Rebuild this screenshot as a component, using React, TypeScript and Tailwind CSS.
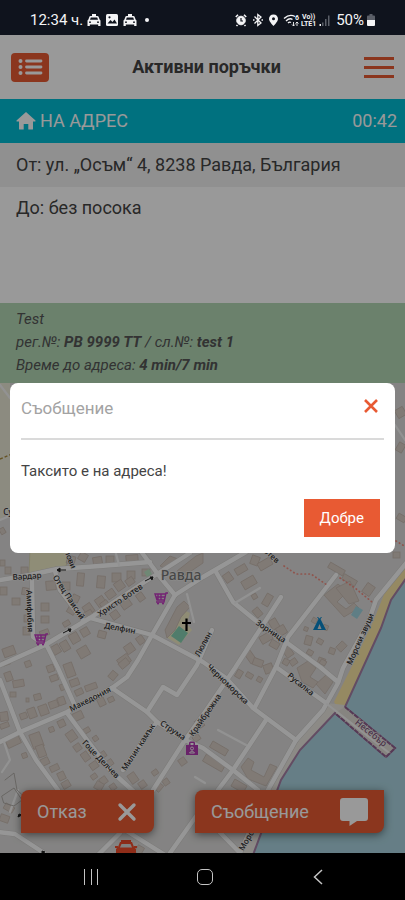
import React from "react";

type Box = [x: number, y: number, w: number, h: number, angle: number];

// Main streets, drawn wide with a thin darker casing.
const streets: string[] = [
  "M0 580L30 575L57 569L100 566L150 562",
  "M32 577L33 637L45 645",
  "M55 571L60 590L83 620",
  "M-2 666L45 645L90 618L143 583L190 553",
  "M140 550L160 577L175 595",
  "M175 595L203 577L246 552",
  "M175 595L152 635L138 660L127 677L112 688",
  "M90 618L152 635L203 662L226 678L253 708L296 740",
  "M112 688L147 712L157 722L185 740L203 748L233 770L258 790",
  "M-2 743L20 732L67 712L112 688",
  "M0 680L20 732L36 760L58 790",
  "M47 646L58 668L75 706",
  "M67 713L87 740L110 770L132 790L150 806",
  "M157 722L140 745L123 770",
  "M281 597L235 668L220 690L203 715L185 740L153 790",
  "M212 630L197 665L177 695L163 687L147 712",
  "M216 572L233 602L255 620L286 642L320 667L338 682",
  "M336 575L288 637L276 667L255 707",
  "M276 667L326 703",
  "M407 562L376 600L368 623L343 668L338 683L323 710L296 740L268 790L240 853",
  "M266 720L233 770L218 790",
  "M-2 832L15 834L44 853",
  "M197 815L170 853",
  "M120 833L98 855",
  "M125 830L165 855",
  "M203 815L240 853",
];

const lanes: string[] = [
  "M115 550L119 565",
  "M187 594L194 622",
  "M260 588L235 603",
  "M218 730L246 745",
  "M4 742L10 760L2 772",
  "M10 812L18 790",
  "M0 385L10 398",
  "M395 425L405 440",
  "M0 520L12 515",
  "M195 777L205 783",
];

const houses: Box[] = [
  [5, 567, 6, 7, 0], [21, 567, 7, 7, 0], [0, 587, 7, 8, 0], [12, 598, 8, 7, 0], [22, 588, 8, 7, 10],
  [46, 581, 10, 9, -5], [62, 582, 8, 8, 0], [77, 573, 7, 13, 5], [97, 576, 8, 12, 5], [112, 573, 9, 9, 0],
  [127, 571, 8, 8, 0], [67, 556, 8, 8, 15], [79, 553, 8, 8, 30], [93, 557, 9, 7, -10], [106, 556, 8, 8, 0],
  [126, 555, 12, 7, -5], [142, 569, 8, 7, 0], [41, 603, 8, 8, 0], [41, 616, 8, 7, 0], [24, 615, 9, 7, 0],
  [23, 627, 8, 8, 0], [40, 630, 9, 6, -20], [68, 605, 8, 9, 30], [72, 595, 7, 7, 25], [84, 604, 9, 10, -35],
  [80, 612, 13, 7, -30], [96, 597, 9, 9, -35], [106, 590, 9, 8, -35], [115, 581, 9, 9, -35], [126, 578, 8, 7, -35],
  [121, 600, 10, 8, -35], [111, 611, 8, 8, -35], [101, 601, 8, 8, -35], [137, 593, 7, 8, -35],
  [52, 645, 8, 9, -30], [61, 641, 8, 10, -30], [70, 633, 9, 10, -30], [81, 628, 8, 8, -30], [63, 621, 7, 5, -30],
  [78, 647, 11, 10, -30], [118, 656, 12, 9, -35], [125, 644, 9, 9, -35], [137, 636, 7, 8, -35], [98, 631, 8, 7, 15],
  [3, 647, 12, 9, -20], [5, 672, 7, 9, -20], [13, 680, 11, 7, -10], [3, 660, 7, 5, -20],
  [25, 661, 6, 6, -20], [47, 665, 7, 7, -20], [65, 663, 9, 14, -20], [70, 679, 9, 7, -20], [60, 684, 6, 6, -20],
  [50, 675, 8, 6, -20], [10, 692, 6, 5, 0], [26, 698, 3, 4, 0], [34, 694, 7, 6, -15], [20, 713, 7, 6, -20],
  [28, 708, 8, 10, -20], [39, 705, 9, 10, -20], [49, 701, 9, 7, -20], [58, 697, 7, 8, -20], [75, 689, 8, 6, -25],
  [85, 684, 12, 6, -20], [98, 698, 7, 8, -25], [108, 697, 6, 5, -25], [109, 672, 8, 7, -50], [119, 660, 10, 7, -40],
  [0, 712, 8, 9, -10], [0, 723, 9, 5, -20], [6, 736, 14, 10, -25], [22, 753, 5, 5, -20],
  [31, 733, 11, 15, -20], [37, 745, 8, 12, -20], [49, 727, 5, 5, -20], [58, 720, 7, 7, -25], [73, 712, 10, 8, -25],
  [67, 731, 9, 10, -35], [74, 744, 7, 7, -35], [83, 728, 7, 5, -30], [82, 752, 7, 9, -35], [93, 736, 5, 5, -35],
  [41, 758, 8, 7, -25], [50, 765, 9, 6, -25], [58, 772, 7, 8, -25], [62, 781, 8, 7, -30],
  [90, 762, 8, 7, -35], [99, 752, 7, 6, -35], [106, 760, 7, 6, -35], [100, 777, 7, 7, -35], [129, 773, 8, 10, -35],
  [91, 774, 6, 5, -35], [110, 784, 6, 6, -35], [139, 781, 7, 7, -35], [163, 779, 6, 6, -35], [179, 758, 7, 7, -35],
  [152, 770, 6, 5, -35], [196, 719, 7, 9, -35], [193, 735, 7, 6, -35],
  [224, 573, 8, 9, -35], [235, 566, 12, 7, -30], [251, 556, 8, 9, 20], [258, 560, 14, 8, -30],
  [242, 578, 14, 9, -30], [252, 594, 5, 5, -30], [264, 594, 7, 12, 30], [254, 608, 7, 9, -40],
  [270, 619, 8, 10, -30], [277, 626, 9, 9, -30], [260, 634, 12, 8, -30], [270, 641, 9, 7, 30],
  [247, 651, 7, 12, -35], [253, 659, 10, 7, 20], [284, 647, 8, 10, -35], [290, 659, 7, 6, -35],
  [312, 618, 5, 5, 30], [323, 625, 5, 5, 20], [304, 627, 4, 4, 20], [305, 636, 7, 9, 15], [317, 639, 6, 5, 30],
  [307, 650, 6, 5, 30], [318, 658, 7, 6, 20], [329, 648, 6, 6, 20], [338, 642, 7, 9, 45], [364, 584, 9, 11, 35],
  [328, 566, 17, 6, 30], [342, 577, 15, 6, 30], [393, 552, 7, 6, 0], [320, 660, 6, 5, 30],
  [236, 670, 6, 8, 30], [246, 673, 7, 5, 30], [257, 677, 5, 5, 30], [264, 664, 9, 9, -20], [283, 659, 6, 6, 30],
  [210, 745, 18, 7, 30], [203, 759, 22, 8, 30], [232, 782, 14, 8, 30],
  [0, 815, 9, 7, 20], [4, 805, 10, 6, 30], [95, 782, 8, 8, 30], [155, 783, 7, 8, 40],
  [396, 408, 9, 9, -30], [397, 443, 7, 9, 30], [397, 515, 9, 6, 30], [0, 528, 5, 6, -30], [0, 560, 5, 6, 0], [136, 846, 7, 8, 30],
];

const blocks: string[] = [
  "M324 595L338 584L347 592L337 602L346 609L354 603L359 608L344 617Z",
  "M336 588L350 581L359 601L349 604Z",
  "M241 767L248 758L254 762L251 770L264 777L270 764L277 767L266 786L248 779Z",
  "M297 668L308 661L316 668L310 677L318 682L313 688L302 682Z",
  "M316 684L326 675L333 682L325 694Z",
  "M165 630L177 607L184 601L190 607L181 617L175 630L167 638Z",
  "M177 571L196 556L203 553L203 563L181 578Z",
  "M160 566L170 556L178 559L166 569Z",
];

type Label = { text: string; x: number; y: number; angle: number };

const labels: Label[] = [
  { text: "Вардар", x: 27, y: 579, angle: -4 },
  { text: "Амифибия", x: 30, y: 614, angle: 88 },
  { text: "Отец Паисий", x: 69, y: 600, angle: 57 },
  { text: "Христо Ботев", x: 120, y: 603, angle: -34 },
  { text: "Делфин", x: 120, y: 631, angle: 11 },
  { text: "Люлин", x: 203, y: 647, angle: -62 },
  { text: "Зорница", x: 271, y: 634, angle: 34 },
  { text: "Морски звуци", x: 360, y: 642, angle: -66 },
  { text: "Черноморска", x: 228, y: 687, angle: 44 },
  { text: "Русалка", x: 301, y: 687, angle: 39 },
  { text: "Македония", x: 90, y: 702, angle: -27 },
  { text: "Крайбрежна", x: 205, y: 718, angle: -55 },
  { text: "Струма", x: 173, y: 733, angle: 34 },
  { text: "Милин камък", x: 138, y: 750, angle: -57 },
  { text: "Гоце Делчев", x: 101, y: 762, angle: 46 },
];

function TownMap() {
  return (
    <svg
      className="absolute inset-0 h-full w-full"
      viewBox="0 383 405 470"
      preserveAspectRatio="xMidYMin slice"
      role="img"
      aria-label="Карта на Равда"
    >
      <rect y="300" width="405" height="600" fill="#dcdbda" />
      <path d="M0 383H10V510L0 520Z" fill="#eae8d6" />
      <path d="M0 459L12 454" stroke="#a98a3c" strokeWidth="1.5" strokeDasharray="3 2" />
      <path d="M30 550H70L65 570L56 569L29 574Z" fill="#efecc6" stroke="#cfcaa0" strokeWidth="0.6" />
      <path d="M166 637L180 608L190 613L187 624L192 630L179 645Z" fill="#eeeac4" />
      <g fill="#d6cbc4" stroke="#c4b7ad" strokeWidth="0.8">
        {houses.map(([x, y, w, h, angle], i) => (
          <rect key={i} x={x} y={y} width={w} height={h} transform={`rotate(${angle} ${x + w / 2} ${y + h / 2})`} />
        ))}
        {blocks.map((d) => (
          <path key={d} d={d} />
        ))}
      </g>
      <path d="M407 560L385 592L373 622L354 662L334 702L340 712L352 700L384 628L394 600L407 580Z" fill="#f9e4a3" />
      <path d="M326 703L345 705L391 748L386 757L335 714L300 750L281 780L253 853H240L268 790L296 742Z" fill="#e9e6df" />
      <path
        d="M407 577L391 600L381 628L345 707L395 748L386 757L335 713L300 750L281 780L253 855H407Z"
        fill="#aad3df"
        stroke="#a57fa5"
        strokeWidth="2"
      />
      <path d="M345 707L395 748L386 757L335 713Z" fill="#e0dcd6" />
      <path d="M345 707L395 748L386 757L335 713" fill="none" stroke="#8e5f8e" strokeWidth="2" strokeDasharray="5 1" />
      <g fill="none" strokeLinejoin="round" strokeLinecap="round">
        <g stroke="#cfcdcb" strokeWidth="5.6">
          {streets.map((d) => (
            <path key={d} d={d} />
          ))}
        </g>
        <g stroke="#fbfbfb" strokeWidth="4.4">
          {streets.map((d) => (
            <path key={d} d={d} />
          ))}
        </g>
        <g stroke="#f4f4f4" strokeWidth="2.2">
          {lanes.map((d) => (
            <path key={d} d={d} />
          ))}
          <path d="M327 704L388 752" />
        </g>
        <path
          d="M284 566L296 574L311 574L327 585M340 578L355 588L372 602M396 541L406 547"
          stroke="#ee8c80"
          strokeWidth="1.7"
          strokeDasharray="0.5 3.4"
        />
        <path d="M2 796L14 788L22 800L14 806L4 803ZM5 780L14 773L17 790L28 800" stroke="#a9a5a0" strokeWidth="0.9" />
      </g>
      <path d="M179 626L188 633L181 643L171 636Z" fill="#86cfb2" />
      <path d="M144 572L149 569L152 574L147 577Z" fill="#b9e3c4" />
      <path d="M356 606L363 610L357 619L351 615Z" fill="#9fd3de" />
      {/* one-way arrows */}
      <g stroke="#222" strokeWidth="1" fill="#222">
        <path d="M66 570H57M57 570L60 568V572Z" />
        <path d="M145 581L153 577M153 577L150 577L152 580Z" />
        <path d="M63 633L71 629M71 629L68 629L70 632Z" />
        <path d="M18 817L22 815L19 814ZM42 851L45 852L42 853Z" />
      </g>
      {/* shops, church, camp site */}
      <g fill="none" stroke="#c03ac0" strokeWidth="1.4">
        <path d="M168 593H166L164 602H156M166 594H155L157 600H164M158 594V600M161 594V600M156 597H165" />
        <path d="M48 634H46L44 643H36M46 635H35L37 641H44M38 635V641M41 635V641M36 638H45" />
      </g>
      <g fill="#c03ac0">
        <circle cx="158" cy="603.5" r="1.1" />
        <circle cx="163" cy="603.5" r="1.1" />
        <circle cx="38" cy="644.5" r="1.1" />
        <circle cx="43" cy="644.5" r="1.1" />
      </g>
      <path d="M186.500 618.500V631M182 623H191" stroke="#000" strokeWidth="2.200" />
      <path
        d="M313 630H326L320.500 619L322 617H321L319.500 618.500L318 617H317L318.500 619ZM317.500 629L319.500 624L321.500 629Z"
        fill="#0a86c8"
        fillRule="evenodd"
      />
      <path d="M186 745H189V743Q189 741.500 190.500 741.500H193.500Q195 741.500 195 743V745H198V755H186ZM190.500 745H193.500V743H190.500Z" fill="#b03ab0" />
      <circle cx="192" cy="748.500" r="1.500" fill="none" stroke="#eee" />
      <path d="M189.500 753Q192 749 194.500 753Z" fill="none" stroke="#eee" />
      <g
        fontFamily="'Noto Sans', sans-serif"
        fontSize="8"
        fontWeight="500"
        textAnchor="middle"
        fill="#2c2c2c"
        stroke="#ecebea"
        strokeWidth="1.2"
        paintOrder="stroke"
      >
        {labels.map(({ text, x, y, angle }) => (
          <text key={text} x={x} y={y} transform={`rotate(${angle} ${x} ${y - 3})`}>
            {text}
          </text>
        ))}
        <text x="64" y="551" transform="rotate(68 64 551)">Кирилови</text>
        <text x="268" y="556" transform="rotate(42 268 556)">Ботев</text>
        <text x="251" y="838" transform="rotate(-60 251 838)">Морски</text>
        <text x="8" y="515">Су</text>
        <text x="371" y="736" fontSize="9" fill="#7c5478" transform="rotate(39 371 733)">Несебър</text>
        <text x="181" y="580" fontSize="14" fill="#777">Равда</text>
      </g>
      {/* the cab on its way */}
      <g fill="#ee4b2b">
        <path d="M121 840H131V843H121Z" />
        <path d="M120 842H132L134 847L136 849V858H116V849L118 847Z" />
        <path d="M121.500 844H130.500L132 847.500H120Z" fill="#d8d6d4" />
        <path d="M115 846H118V848H115ZM134 846H137V848H134Z" />
      </g>
    </svg>
  );
}

function TaxiGlyph() {
  return (
    <svg className="h-3.5 w-3.5 shrink-0" viewBox="0 0 14 14" fill="#f4f4f6" aria-hidden="true">
      <path
        fillRule="evenodd"
        d="M5 1H9V3H10.500Q11.300 3 11.600 3.800L12.600 6.500L13.500 7.500V13H11.200V11.500H2.800V13H.5V7.500L1.400 6.500L2.400 3.800Q2.700 3 3.500 3H5ZM3.800 4.500L3 6.800H11L10.200 4.500ZM3 8.300A.9.900 0 1 0 3 10.100A.9.900 0 1 0 3 8.300ZM11 8.300A.9.900 0 1 0 11 10.100A.9.900 0 1 0 11 8.300Z"
      />
    </svg>
  );
}

function StatusBar() {
  return (
    <div className="flex h-[35px] shrink-0 items-center justify-between bg-[#0f131d] pt-1 pr-[29px] pl-[30px] text-[#f4f4f6]">
      <div className="flex items-center gap-1">
        <span className="text-[15px] leading-5">12:34 ч.</span>
        <TaxiGlyph />
        <svg className="h-3.5 w-3.5" viewBox="0 0 14 14" aria-hidden="true">
          <rect x="1" y="1" width="12" height="12" rx="1.500" fill="#f4f4f6" />
          <path d="M2.500 10.500L5.500 7L7.500 9L9.500 6.500L12 10.500Z" fill="#0f131d" />
          <circle cx="4.500" cy="4.300" r="1.100" fill="#0f131d" />
        </svg>
        <TaxiGlyph />
        <span className="ml-1 h-1 w-1 rounded-full bg-[#f4f4f6]" />
      </div>
      <div className="flex items-center">
        <svg className="h-4 w-24" viewBox="0 0 96 16" aria-hidden="true">
          <g fill="none" stroke="#f4f4f6">
            <circle cx="7" cy="8.500" r="4.300" fill="#f4f4f6" />
            <path d="M1.800 5L4 2.800M12.200 5L10 2.800M3.500 13L2.500 14M10.500 13L11.500 14" strokeWidth="1.600" />
            <path d="M7 6V9H9" stroke="#0f131d" strokeWidth="1.200" />
            <path d="M20.500 4.500L27 11L23.800 13.500V2.500L27 5L20.500 11.500" strokeWidth="1.300" />
            <path d="M19 8H20.500M27.500 8H29" strokeWidth="1.500" />
            <path d="M50 6.500Q55.500 1.500 61 4.500M52 9Q55.500 5.500 58.500 7.500M54 11Q55.500 9.500 57 10.500" strokeWidth="1.400" />
            <path d="M59.500 10V14M58 12.500L59.500 14L61 12.500M63 14V10M61.500 11.500L63 10L64.500 11.500" strokeWidth=".9" />
          </g>
          <path
            fillRule="evenodd"
            fill="#f4f4f6"
            d="M39.500 2.500C36.700 2.500 35 4.500 35 7C35 9.600 39.500 14 39.500 14S44 9.600 44 7C44 4.500 42.300 2.500 39.500 2.500ZM39.500 5.300A1.500 1.500 0 1 1 39.500 8.300A1.500 1.500 0 1 1 39.500 5.300Z"
          />
          <g fill="#f4f4f6" fontFamily="Roboto, sans-serif" fontWeight="700" fontSize="7">
            <text x="61" y="8">6</text>
            <text x="68" y="7">Vo))</text>
            <text x="67" y="14">LTE1</text>
          </g>
          <path d="M85.500 12H87V14H85.500Z" fill="#f4f4f6" />
          <path d="M88 10.500H89.500V14H88ZM91 7H92.500V14H91ZM94 3.500H95.500V14H94Z" fill="#5b5f68" />
        </svg>
        <span className="ml-1.5 text-[15px] leading-5">50%</span>
        <svg className="ml-0.5 h-3.5 w-2.5" viewBox="0 0 10 14" aria-hidden="true">
          <path d="M3.500 1H6.500V2.500H8Q9 2.500 9 3.500V7H1V3.500Q1 2.500 2 2.500H3.500Z" fill="#5b5f68" />
          <path d="M1 7H9V12Q9 13 8 13H2Q1 13 1 12Z" fill="#f4f4f6" />
        </svg>
      </div>
    </div>
  );
}

export default function App() {
  return (
    <div className="flex min-h-screen flex-col bg-black font-['Roboto','Noto_Sans',sans-serif]">
      <StatusBar />

      <main className="relative flex flex-1 flex-col bg-white">
        <header className="flex h-16 items-center justify-between px-[11px]">
          <button type="button" aria-label="Списък" className="flex h-[29px] w-[38px] items-center justify-center rounded bg-[#e85a33]">
            <svg className="h-5 w-7" viewBox="0 0 28 20" aria-hidden="true">
              <g fill="none" stroke="#fff" strokeWidth="2.800" strokeLinecap="round">
                <path d="M10.500 4H25M10.500 10H25M10.500 16H25" />
              </g>
              <g fill="#fff">
                <circle cx="4.500" cy="4" r="2" />
                <circle cx="4.500" cy="10" r="2" />
                <circle cx="4.500" cy="16" r="2" />
              </g>
            </svg>
          </button>
          <h1 className="text-lg font-bold text-[#444]">Активни поръчки</h1>
          <button type="button" aria-label="Меню" className="flex w-[30px] flex-col gap-1.5">
            <span className="h-[3px] bg-[#e85a33]" />
            <span className="h-[3px] bg-[#e85a33]" />
            <span className="h-[3px] bg-[#e85a33]" />
          </button>
        </header>

        <div className="flex h-11 items-center justify-between bg-[#00bcd4] pr-2 pl-4 text-lg text-white">
          <span className="flex items-center gap-1">
            <svg className="h-5 w-5" viewBox="0 0 20 20" fill="#fff" aria-hidden="true">
              <path d="M10 1L19.500 9.500Q20 10.500 19 10.500H17V18Q17 18.500 16.500 18.500H12.300V13H7.700V18.500H3.500Q3 18.500 3 18V10.500H1Q0 10.500.5 9.500Z" />
            </svg>
            НА АДРЕС
          </span>
          <span>00:42</span>
        </div>
        <p className="flex h-11 items-center bg-[#f0f0f0] px-4 text-lg text-[#444]">От: ул. „Осъм“ 4, 8238 Равда, България</p>
        <p className="h-[116px] px-4 pt-[7px] text-lg text-[#444]">До: без посока</p>

        <div className="h-20 bg-[#b2d8b5] px-4 pt-[5px] text-[15px] leading-[23px] text-[#555] italic">
          <p>Test</p>
          <p>
            рег.№: <b>PB 9999 TT</b> / сл.№: <b>test 1</b>
          </p>
          <p>
            Време до адреса: <b>4 min/7 min</b>
          </p>
        </div>

        <section className="relative flex min-h-[470px] flex-1 flex-col justify-end overflow-hidden">
          <TownMap />
          <div className="relative flex justify-between px-[21px] pb-5 text-lg text-white">
            <button
              type="button"
              className="flex h-[43px] w-[133px] items-center justify-between rounded-tl-lg rounded-br-lg bg-[#e85a33] px-4 shadow-[0_2px_8px_rgba(0,0,0,0.5)]"
            >
              Отказ
              <svg className="h-[22px] w-[22px]" viewBox="0 0 22 22" aria-hidden="true">
                <path d="M4 4L18 18M18 4L4 18" stroke="#fff" strokeWidth="3.400" strokeLinecap="round" />
              </svg>
            </button>
            <button
              type="button"
              className="flex h-[43px] w-[189px] items-center justify-between rounded-tl-lg rounded-br-lg bg-[#e85a33] px-4 shadow-[0_2px_8px_rgba(0,0,0,0.5)]"
            >
              Съобщение
              <svg className="h-7 w-7" viewBox="0 0 28 28" fill="#fff" aria-hidden="true">
                <path d="M3 0H25Q28 0 28 3V20Q28 23 25 23H17L9.500 28V23H3Q0 23 0 20V3Q0 0 3 0Z" />
              </svg>
            </button>
          </div>
        </section>

        <div className="absolute inset-0 flex items-center justify-center bg-black/40 px-2.5 pt-12">
          <div role="dialog" aria-modal="true" aria-labelledby="dialog-title" className="w-full rounded-lg bg-white px-[11px] pb-4">
            <div className="flex h-[57px] justify-between border-b-2 border-[#dadada] pt-3 pr-1.5">
              <h2 id="dialog-title" className="text-[17px] leading-[26px] text-[#a3a3a3]">
                Съобщение
              </h2>
              <button type="button" aria-label="Затвори" className="h-[22px]">
                <svg className="h-3.5 w-3.5" viewBox="0 0 14 14" aria-hidden="true">
                  <path d="M1 1L13 13M13 1L1 13" stroke="#e85a33" strokeWidth="2.600" />
                </svg>
              </button>
            </div>
            <p className="pt-[19px] pb-4 text-[15px] leading-6 text-[#444]">Таксито е на адреса!</p>
            <div className="flex justify-end pr-1">
              <button type="button" className="h-[38px] bg-[#e85a33] px-4 text-[15px] text-white">
                Добре
              </button>
            </div>
          </div>
        </div>
      </main>

      <nav className="flex h-[47px] shrink-0 items-center justify-between bg-black pr-[72px] pl-[84px]">
        <button type="button" aria-label="Последни" className="flex h-4 w-3.5 justify-between">
          <span className="w-px bg-[#c4c4c4]" />
          <span className="w-px bg-[#c4c4c4]" />
          <span className="w-px bg-[#c4c4c4]" />
        </button>
        <button type="button" aria-label="Начало" className="h-4 w-4 rounded-[5px] border border-[#c4c4c4]" />
        <button type="button" aria-label="Назад" className="flex w-[22px] justify-start pl-0.5">
          <svg className="h-4 w-2.5" viewBox="0 0 10 16" fill="none" aria-hidden="true">
            <path d="M9 1L1.500 8L9 15" stroke="#c4c4c4" strokeWidth="1.500" />
          </svg>
        </button>
      </nav>
    </div>
  );
}
